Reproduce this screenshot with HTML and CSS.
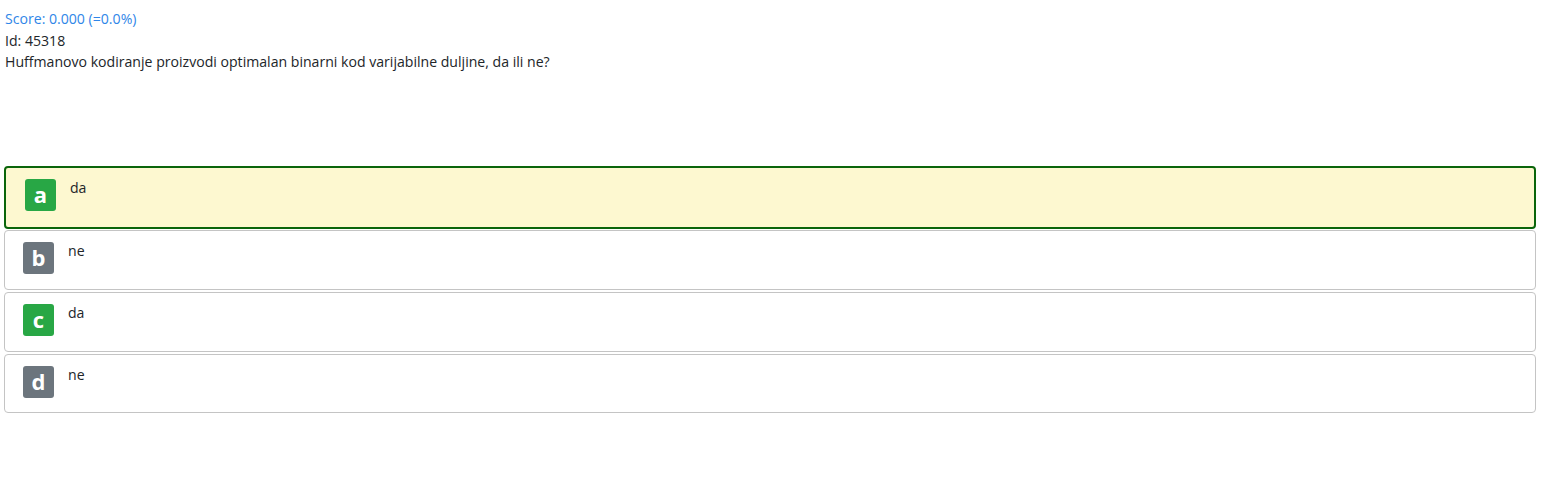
FILE: index.html
```html
<!DOCTYPE html>
<html>
<head>
<meta charset="utf-8">
<link rel="stylesheet" href="styles.css">
</head>
<body>
<div class="page">
  <div class="score">Score: 0.000 (=0.0%)</div>
  <div class="line">Id: 45318</div>
  <div class="line">Huffmanovo kodiranje proizvodi optimalan binarni kod varijabilne duljine, da ili ne?</div>
  <div class="answers">
    <div class="answer selected"><span class="badge green">a</span><span class="text">da</span></div>
    <div class="answer"><span class="badge gray">b</span><span class="text">ne</span></div>
    <div class="answer"><span class="badge green">c</span><span class="text">da</span></div>
    <div class="answer"><span class="badge gray">d</span><span class="text">ne</span></div>
  </div>
</div>
</body>
</html>
```
FILE: styles.css
```css
html, body { margin: 0; padding: 0; background: #fff; }
body { font-family: "Open Sans", "Noto Sans", sans-serif; font-size: 14.1px; color: #212529; }
.page { padding: 8px 24px 0 4px; }
.score { color: #2f86e8; line-height: 22px; padding-left: 1px; }
.line { line-height: 21px; padding-left: 1px; }
.answers { margin-top: 94px; display: flex; flex-direction: column; gap: 2px; }
.answer { display: flex; align-items: flex-start; gap: 14px; border: 1px solid #c4c4c4; border-radius: 4px; box-sizing: border-box; height: 60px; padding: 11px 18px; background: #fff; }
.answer.selected { border: 2px solid #0b650b; background: #fdf8d0; padding: 11px 19px; height: 63px; margin-bottom: -1px; }
.answer:last-child { height: 59px; }
.badge { width: 31px; height: 32px; border-radius: 3px; color: #fff; font-weight: 700; font-size: 22px; display: flex; align-items: center; justify-content: center; line-height: 1; padding-bottom: 2px; box-sizing: border-box; }
.green { background: #28a745; }
.gray { background: #6c757d; }
.text { line-height: 18px; }
```
